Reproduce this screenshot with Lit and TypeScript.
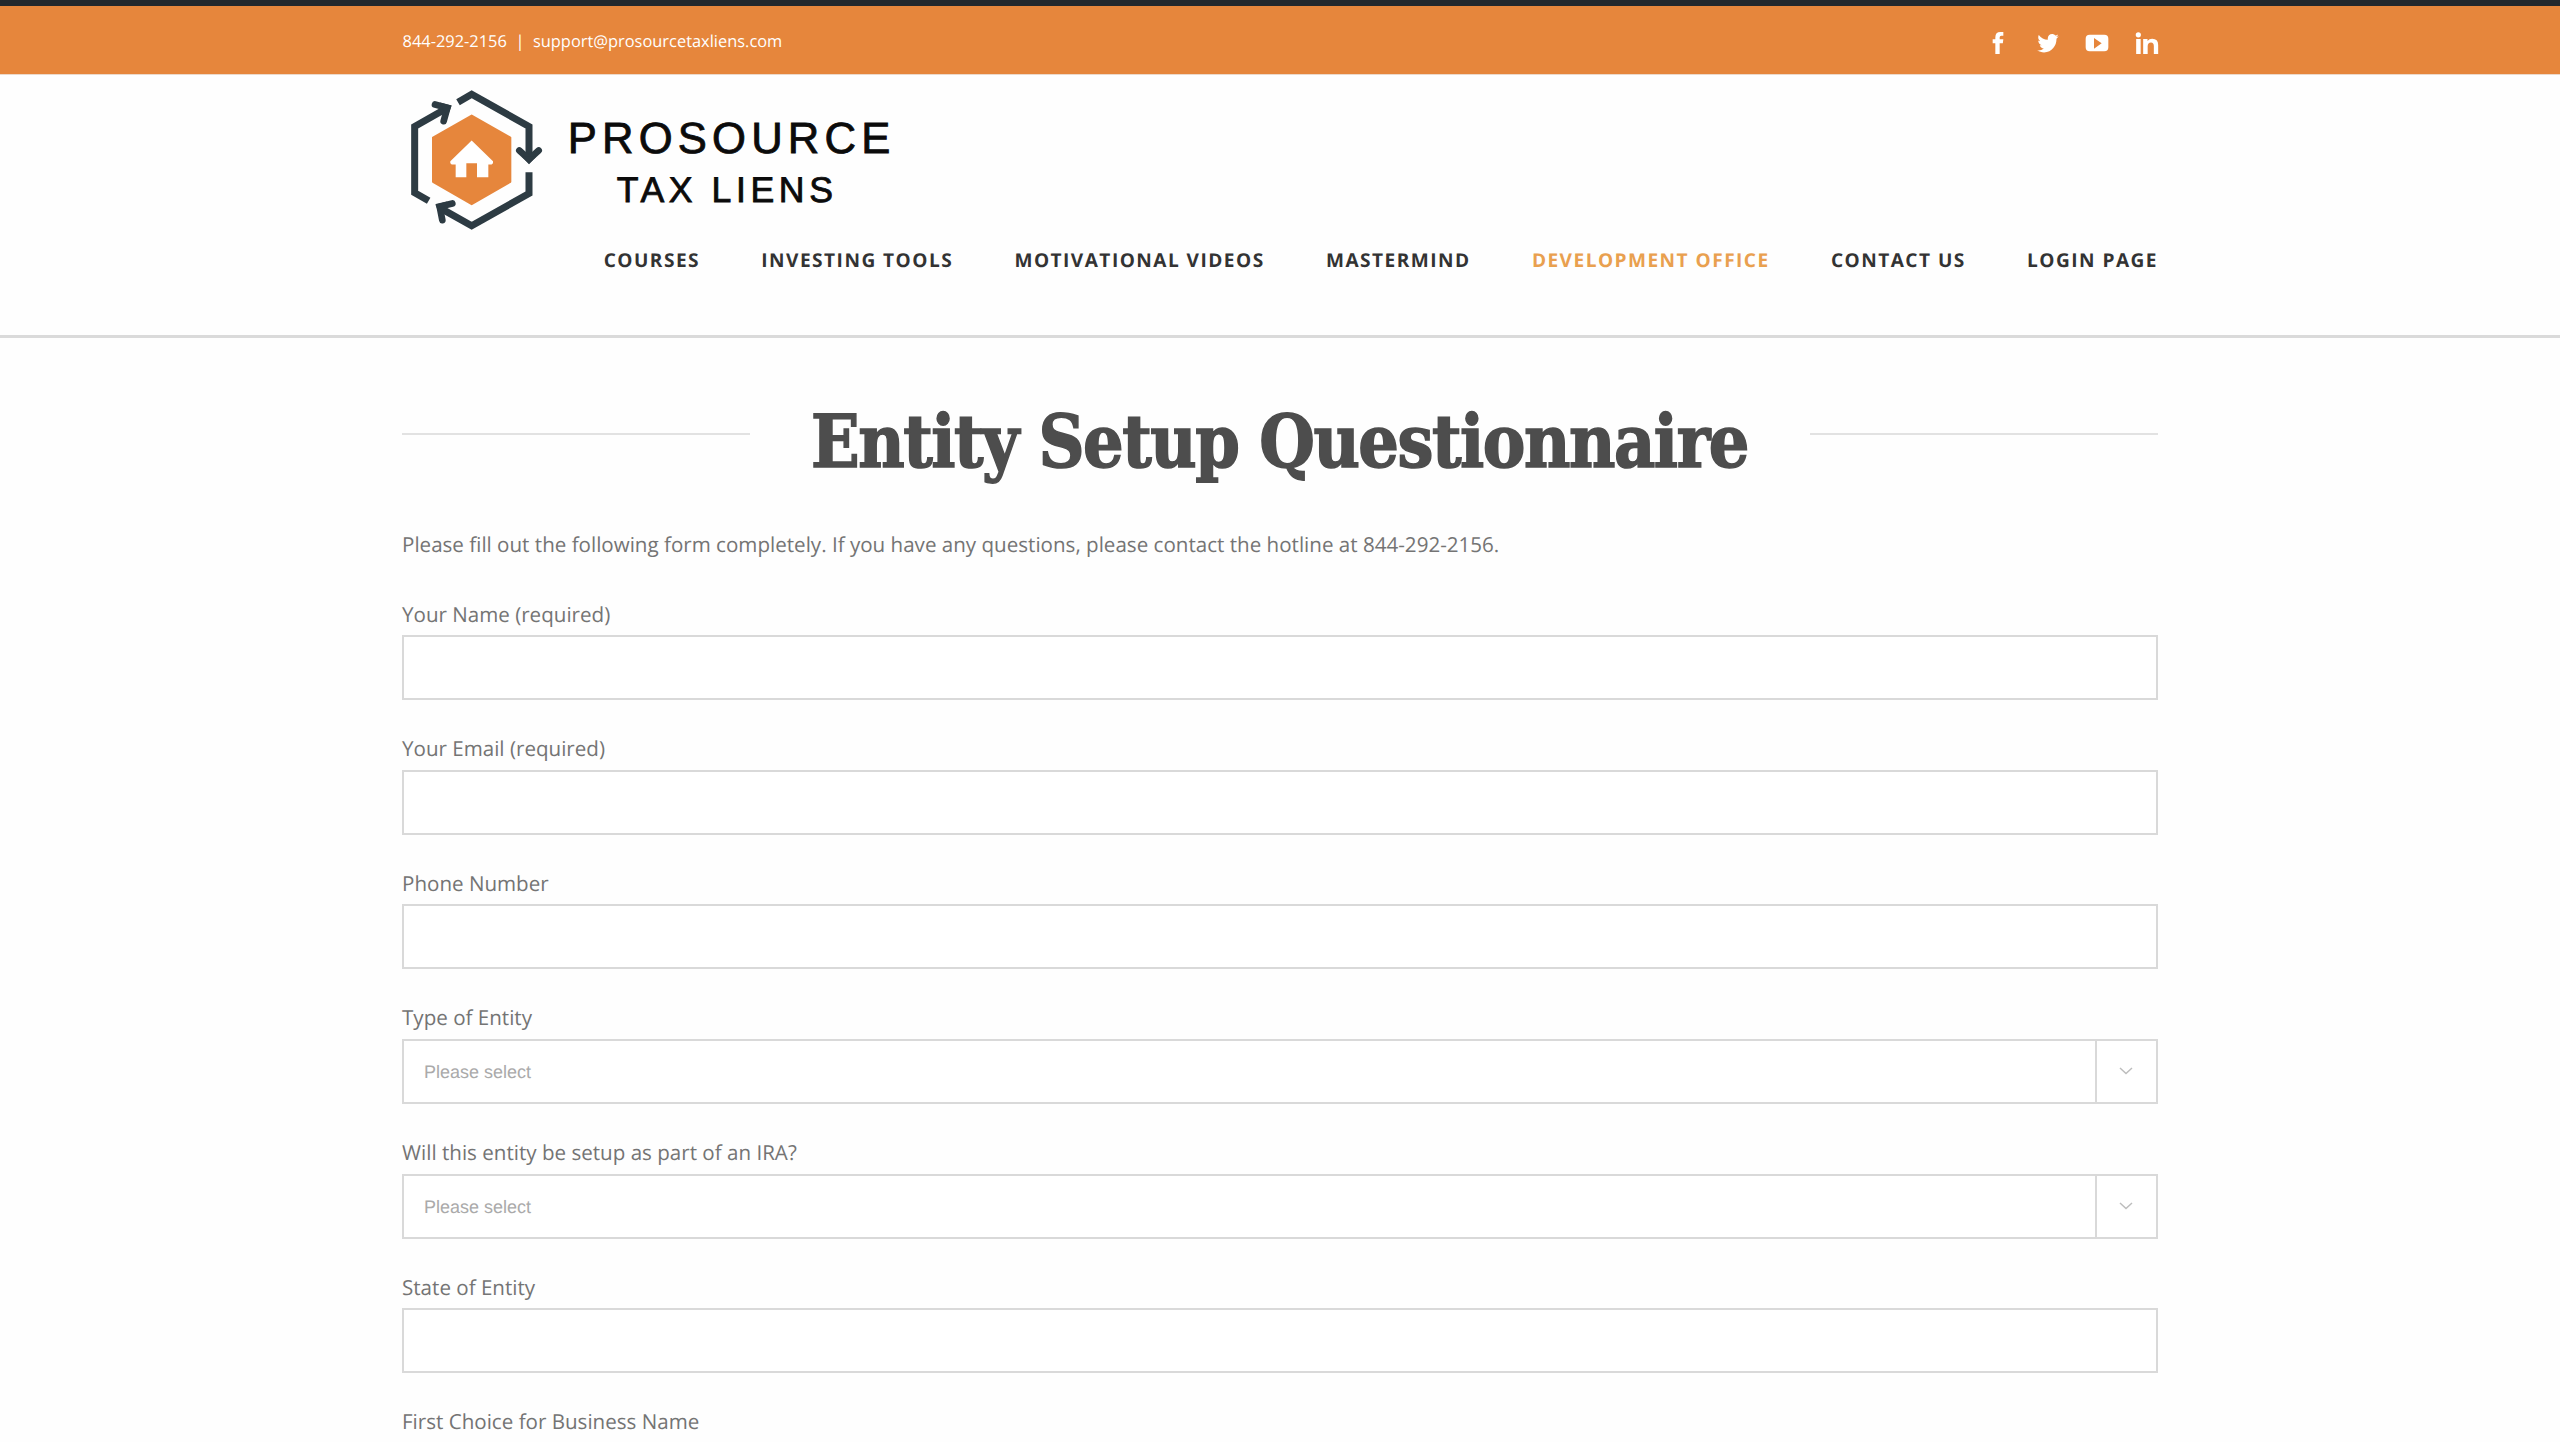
import { LitElement, html, svg, css } from "lit";
import { customElement } from "lit/decorators.js";
import { classMap } from "lit/directives/class-map.js";

interface Field {
  label: string;
  kind: "text" | "select";
}

const NAV = [
  "Courses",
  "Investing Tools",
  "Motivational Videos",
  "Mastermind",
  "Development Office",
  "Contact Us",
  "Login Page",
];
const ACTIVE = "Development Office";

const FIELDS: Field[] = [
  { label: "Your Name (required)", kind: "text" },
  { label: "Your Email (required)", kind: "text" },
  { label: "Phone Number", kind: "text" },
  { label: "Type of Entity", kind: "select" },
  { label: "Will this entity be setup as part of an IRA?", kind: "select" },
  { label: "State of Entity", kind: "text" },
  { label: "First Choice for Business Name", kind: "text" },
];

const SOCIAL = [
  {
    name: "Facebook",
    box: "79 94 72 72",
    shape: svg`<path d="M107 163V131H99V119H107V113Q107 97 122 97H131V108H125Q120 108 120 113V119H131L129.500 131H120V163Z"/>`,
  },
  {
    name: "Twitter",
    box: "228 94 72 72",
    shape: svg`<path transform="translate(232 97) scale(.125 .132)" d="M459.370 151.716c.325 4.548.325 9.097.325 13.645 0 138.720-105.583 298.558-298.558 298.558-59.452 0-114.680-17.219-161.137-47.106 8.447.974 16.568 1.299 25.340 1.299 49.055 0 94.213-16.568 130.274-44.832-46.132-.975-84.792-31.188-98.112-72.772 6.498.974 12.995 1.624 19.818 1.624 9.421 0 18.843-1.300 27.614-3.573-48.081-9.747-84.143-51.980-84.143-102.985v-1.299c13.969 7.797 30.214 12.670 47.431 13.319-28.264-18.843-46.781-51.005-46.781-87.391 0-19.492 5.197-37.360 14.294-52.954 51.655 63.675 129.300 105.258 216.365 109.807-1.624-7.797-2.599-15.918-2.599-24.040 0-57.828 46.782-104.934 104.934-104.934 30.213 0 57.502 12.670 76.670 33.137 23.715-4.548 46.456-13.320 66.599-25.340-7.798 24.366-24.366 44.833-46.132 57.827 21.117-2.273 41.584-8.122 60.426-16.243-14.292 20.791-32.161 39.308-52.628 54.253z"/>`,
  },
  {
    name: "YouTube",
    box: "376 94 72 72",
    shape: svg`<path fill-rule="evenodd" d="M390 105H434Q446 105 446 117V143Q446 155 434 155H390Q378 155 378 143V117Q378 105 390 105ZM403 115V147L426 131Z"/>`,
  },
  {
    name: "LinkedIn",
    box: "524.500 94 72 72",
    shape: svg`<circle cx="534.500" cy="105.500" r="7.800"/><path d="M528 118H541.500V163H528ZM549 118H562V124Q567 117 576 117Q594 117 594 136V163H581V139Q581 128.500 572.500 128.500Q562.500 128.500 562.500 140V163H549Z"/>`,
  },
];

@customElement("site-logo")
class SiteLogo extends LitElement {
  static styles = css`
    :host { display: block; }
    .logo { display: block; width: 508px; height: 160px; }
    .ring { fill: none; stroke: #2d3b43; stroke-width: 21; }
    .tip { fill: none; stroke: #2d3b43; stroke-width: 20; stroke-linecap: round; }
    .head { fill: #2d3b43; }
    .core { fill: #e6863c; stroke: #e6863c; stroke-width: 6; stroke-linejoin: round; }
    .house { fill: #fff; }
    .word { font-family: "Liberation Sans", Arial, sans-serif; fill: #0b0b0b; stroke: #0b0b0b; stroke-width: 2.500; }
  `;
  render() {
    return html`<svg class="logo" viewBox="36 225.500 1524 480">
      <path class="ring" d="M204 307L245 283L417 380V470" />
      <path class="ring" d="M417 517V581L245 678L155 627" />
      <path class="ring" d="M116 603L74 579V380L165 328" />
      <path class="tip" d="M388 452L417 478L446 452" />
      <path class="tip" d="M135 314L172 324L161 364" />
      <path class="tip" d="M187 611L149 620L157 661" />
      <path class="head" d="M395 470L417 493L439 470Z" />
      <path class="head" d="M150 308L185 317L172 352Z" />
      <path class="head" d="M136 614L172 605L150 648Z" />
      <path class="core" d="M245 347L361 413V546L245 613L129 546V413Z" />
      <path class="house" d="M245 422L309 484Q311 494 300 494H295V532H261V490H229V532H197V494H190Q179 494 181 484Z" />
      <text class="word" x="533" y="460" font-size="131" textLength="968">PROSOURCE</text>
      <text class="word" x="680" y="605.500" font-size="107" textLength="649">TAX LIENS</text>
    </svg>`;
  }
}

@customElement("form-field")
class FormField extends LitElement {
  static properties = { label: {}, kind: {} };
  declare label: string;
  declare kind: string;
  static styles = css`
    :host { display: block; height: 134.660px; }
    .label { display: block; height: 35.700px; line-height: 35.700px; font-size: 20.590px; color: #747474; }
    .box {
      box-sizing: border-box; height: 65px; margin-top: 1.800px; border: 2px solid #d9d9d9;
      background: #fff; display: flex; align-items: stretch; justify-content: space-between;
    }
    .value {
      font: 18px/63px "Liberation Sans", Arial, sans-serif; color: #aaa; padding-left: 20px;
    }
    .toggle {
      width: 59px; border-left: 2px solid #d9d9d9; display: flex; align-items: center; justify-content: center;
    }
    .chevron { width: 14px; height: 10px; fill: none; stroke: #bdbdbd; stroke-width: 1.500; }
  `;
  render() {
    return html`<span class="label">${this.label}</span>
      <div class="box">
        ${this.kind === "select"
          ? html`<span class="value">Please select</span>
              <span class="toggle"><svg class="chevron" viewBox="0 0 14 10"><path d="M1 2L7 7.500L13 2" /></svg></span>`
          : ""}
      </div>`;
  }
}

@customElement("app-root")
class AppRoot extends LitElement {
  static styles = css`
    :host {
      display: block; height: 1442px; overflow: hidden; background: #fefefe;
      font-family: "Open Sans", "Noto Sans", sans-serif; text-rendering: geometricPrecision;
    }
    .wrap { width: 1755.500px; margin: 0 402px; }
    .top { background: #e6863c; border-top: 6px solid #23282d; height: 68px; border-bottom: 1px solid #ecd9ca; }
    .topRow { display: flex; justify-content: space-between; height: 68px; }
    .contact { color: #fff; font-size: 16.420px; line-height: 24px; padding: 23px 0 0 .5px; white-space: pre; }
    .social { display: flex; gap: 25.500px; padding-top: 25px; margin-right: -1px; }
    .icon { width: 24px; height: 24px; fill: #fff; display: block; }
    .head { height: 260px; border-bottom: 3px solid #dadada; }
    .nav { display: flex; justify-content: flex-end; gap: 61.300px; margin-right: -.5px; padding-top: 9px; }
    .link {
      font-size: 19.080px; line-height: 32px; font-weight: 700; letter-spacing: 1.470px;
      text-transform: uppercase; color: #333; white-space: nowrap;
    }
    .active { color: #e9a04f; }
    .title { display: flex; align-items: center; justify-content: space-between; height: 100px; padding-top: 50px; }
    .rule { width: 347.500px; height: 2px; background: #e2e2e2; margin-bottom: 8px; }
    .heading { margin: 0; width: 937px; height: 100px; }
    .headingArt { display: block; width: 937px; height: 100px; overflow: visible; }
    .headingText {
      font-family: "Roboto Slab", "DejaVu Serif Condensed", "DejaVu Serif", serif; letter-spacing: -1.500px;
      font-weight: 700; font-size: 73px; fill: #4d4d4d; stroke: #4d4d4d; stroke-width: 1.500;
    }
    .intro { margin: 39px 0 34.500px; font-size: 20.590px; line-height: 36px; color: #747474; }
  `;
  render() {
    return html`
      <div class="top">
        <div class="wrap topRow">
          <div class="contact">844-292-2156&nbsp; |&nbsp; support@prosourcetaxliens.com</div>
          <div class="social">
            ${SOCIAL.map((s) => html`<svg class="icon" viewBox=${s.box} aria-label=${s.name}>${s.shape}</svg>`)}
          </div>
        </div>
      </div>
      <div class="head">
        <div class="wrap">
          <site-logo></site-logo>
          <nav class="nav">
            ${NAV.map((n) => html`<a class=${classMap({ link: true, active: n === ACTIVE })}>${n}</a>`)}
          </nav>
        </div>
      </div>
      <main class="wrap">
        <div class="title">
          <span class="rule"></span>
          <h1 class="heading">
            <svg class="headingArt" viewBox="0 0 937 100">
              <text class="headingText" x="0" y="79" textLength="937" lengthAdjust="spacingAndGlyphs">Entity Setup Questionnaire</text>
            </svg>
          </h1>
          <span class="rule"></span>
        </div>
        <p class="intro">Please fill out the following form completely. If you have any questions, please contact the hotline at 844-292-2156.</p>
        ${FIELDS.map((f) => html`<form-field .label=${f.label} .kind=${f.kind}></form-field>`)}
      </main>
    `;
  }
}
